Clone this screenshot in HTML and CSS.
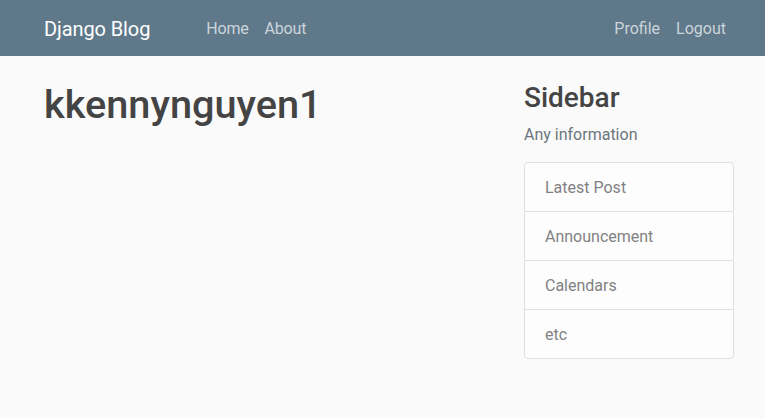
FILE: index.html
```html
<!DOCTYPE html>
<html lang="en">
<head>
<meta charset="utf-8">
<title>Django Blog</title>
<link rel="stylesheet" href="styles.css">
</head>
<body>
<header class="site-header">
  <nav class="navbar">
    <a class="brand" href="#">Django Blog</a>
    <div class="nav-left">
      <a class="nav-link" href="#">Home</a>
      <a class="nav-link" href="#">About</a>
    </div>
    <div class="nav-right">
      <a class="nav-link" href="#">Profile</a>
      <a class="nav-link" href="#">Logout</a>
    </div>
  </nav>
</header>
<main class="container">
  <div class="main-col">
    <h1 class="title">kkennynguyen1</h1>
  </div>
  <aside class="side-col">
    <h3 class="side-title">Sidebar</h3>
    <p class="muted">Any information</p>
    <ul class="list-group">
      <li class="list-item">Latest Post</li>
      <li class="list-item">Announcement</li>
      <li class="list-item">Calendars</li>
      <li class="list-item">etc</li>
    </ul>
  </aside>
</main>
</body>
</html>
```
FILE: styles.css
```css
* { box-sizing: border-box; }
html, body { margin: 0; padding: 0; }
body {
  background: #fafafa;
  color: #333333;
  font-family: Roboto, "Liberation Sans", sans-serif;
  font-size: 16px;
  line-height: 1.5;
}
.site-header {
  background-color: #5f788a;
}
.navbar {
  height: 56px;
  display: flex;
  align-items: center;
  padding: 2px 31px 0 44px;
}
.brand {
  color: #ffffff;
  font-size: 20px;
  line-height: 30px;
  text-decoration: none;
  margin-right: 48px;
  letter-spacing: -0.1px;
}
.nav-left, .nav-right {
  display: flex;
}
.nav-right { margin-left: auto; }
.nav-link {
  color: #cbd5db;
  text-decoration: none;
  padding: 8px;
  line-height: 24px;
  letter-spacing: -0.2px;
}
.nav-right .nav-link { letter-spacing: 0; }
.container {
  display: flex;
  padding: 24px 31px 0 44px;
}
.main-col {
  flex: 1;
}
.side-col {
  width: 210px;
}
.title {
  margin: 1px 0 0;
  font-size: 39.7px;
  line-height: 48px;
  font-weight: 500;
  color: #444444;
}
.side-title {
  margin: 1px 0 8px;
  font-size: 28px;
  line-height: 33.6px;
  font-weight: 500;
  color: #444444;
}
.muted {
  margin: 0 0 15px;
  color: #6c757d;
}
.list-group {
  list-style: none;
  margin: 0;
  padding: 0;
  border: 1px solid #dfdfdf;
  border-radius: 4px;
  background: #fdfdfe;
}
.list-item {
  padding: 13px 20px 11px;
  color: #818182;
  line-height: 24px;
  border-top: 1px solid #dfdfdf;
}
.list-item:first-child { border-top: 0; }
```
